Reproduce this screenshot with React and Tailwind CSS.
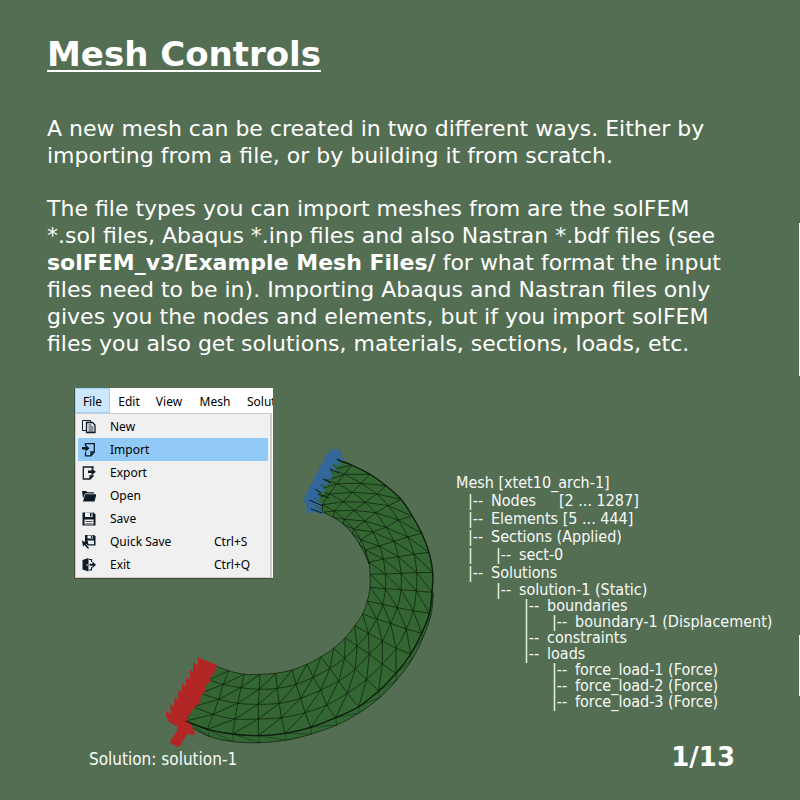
import React from "react";

/* Cross sections of the arch, each listed from the outer to the inner edge. */
const upper = [
  [[140, 58], [125, 90], [108, 122], [82, 150], [60, 180]],
  [[185, 75], [163, 103], [140, 131], [118, 162], [97, 195]],
  [[240, 103], [213, 130], [187, 157], [160, 185], [133, 213]],
  [[288, 137], [260, 162], [225, 187], [192, 211], [163, 238]],
  [[333, 178], [295, 197], [257, 218], [224, 243], [192, 268]],
  [[367, 228], [325, 240], [288, 262], [248, 276], [213, 300]],
  [[395, 280], [353, 291], [312, 304], [268, 318], [226, 330]],
  [[417, 337], [372, 343], [325, 350], [280, 357], [237, 367]],
  [[428, 397], [380, 398], [333, 400], [286, 402], [240, 402]],
  [[426, 457], [379, 453], [333, 449], [286, 446], [240, 442]],
].map((s) => s.map(([x, y]) => [290 + x / 3, 440 + y / 3]));

const lower = [
  [[838, 70], [790, 62], [742, 53], [698, 43], [652, 33]],
  [[815, 130], [769, 117], [722, 100], [680, 87], [638, 72]],
  [[782, 192], [738, 175], [697, 153], [655, 130], [614, 107]],
  [[738, 250], [697, 222], [658, 192], [621, 168], [586, 143]],
  [[686, 303], [650, 268], [616, 237], [584, 205], [551, 175]],
  [[626, 350], [592, 310], [566, 273], [540, 235], [512, 201]],
  [[557, 383], [530, 345], [512, 300], [490, 262], [471, 223]],
  [[482, 412], [465, 368], [452, 325], [438, 283], [426, 240]],
  [[405, 430], [394, 383], [388, 340], [382, 295], [377, 250]],
  [[325, 437], [325, 387], [325, 343], [328, 298], [330, 253]],
  [[248, 432], [255, 387], [263, 340], [273, 293], [283, 253]],
  [[172, 418], [190, 373], [206, 328], [220, 283], [236, 242]],
  [[108, 393], [130, 350], [153, 310], [176, 270], [198, 228]],
].map((s) => s.map(([x, y]) => [150 + x / 3, 590 + y / 3]));

const sections = [...upper, ...lower];

const outerRim = [
  [850, 10], [843, 75], [820, 140], [785, 210], [740, 270], [690, 322], [626, 370],
  [560, 405], [485, 432], [410, 450], [330, 458], [250, 455], [180, 440], [120, 410],
].map(([x, y]) => [150 + x / 3, 590 + y / 3]);

const innerRim = [
  [64, 208], [98, 217], [130, 232], [160, 252], [186, 280], [208, 312], [226, 345], [237, 372],
].map(([x, y]) => [290 + x / 3, 440 + y / 3]);

const at = (x, y) => x.toFixed(1) + " " + y.toFixed(1);
const line = (pts) => "M" + pts.map(([x, y]) => at(x, y)).join("L");

/* The curve segments through the points, without the opening move. */
const bend = (pts) =>
  pts
    .slice(1)
    .map((p, i) => {
      const a = pts[i];
      const before = pts[i - 1] || a;
      const after = pts[i + 2] || p;
      return (
        "C" + at(a[0] + (p[0] - before[0]) / 6, a[1] + (p[1] - before[1]) / 6) +
        " " + at(p[0] - (after[0] - a[0]) / 6, p[1] - (after[1] - a[1]) / 6) +
        " " + at(p[0], p[1])
      );
    })
    .join("");
const curve = (pts) => "M" + at(pts[0][0], pts[0][1]) + bend(pts);
const band = (a, b) => {
  const back = b.slice().reverse();
  return curve(a) + "L" + at(back[0][0], back[0][1]) + bend(back) + "Z";
};

const outer = sections.map((s) => s[0]);
const inner = sections.map((s) => s[4]);
const along = [0, 1, 2, 3, 4].map((k) => curve(sections.map((s) => s[k])));
const across = sections.map((s) => line(s));
const diagonals = sections
  .slice(1)
  .flatMap((next, i) => [0, 1, 2, 3].map((k) => line([sections[i][k + 1], next[k]])));
const rimTies = outerRim.map((p, i) => line([outer[Math.min(9 + i, 22)], p, outer[Math.min(10 + i, 22)]]));
const innerTies = innerRim.map((p, i) => line([inner[i], p, inner[Math.min(i + 1, 7)]]));

function ArchMesh() {
  return (
    <svg
      className="absolute left-[113px] top-[57px] h-[305px] w-[280px]"
      viewBox="160 445 280 305"
      role="img"
      aria-label="Meshed arch with boundary and loads"
    >
      <g fill="#336633">
        <path d={band(outer, inner)} />
        <path d={band(outer.slice(9), outerRim)} />
        <path d={band(inner.slice(0, 8), innerRim)} />
      </g>
      <g fill="none" stroke="#0b1a0b" strokeWidth="0.8" strokeOpacity="0.85">
        {along.map((d, i) => <path key={i} d={d} />)}
        {across.map((d, i) => <path key={i} d={d} />)}
        {diagonals.map((d, i) => <path key={i} d={d} />)}
        {rimTies.map((d, i) => <path key={i} d={d} strokeOpacity="0.5" />)}
        {innerTies.map((d, i) => <path key={i} d={d} />)}
        <path d={curve(outerRim)} />
        <path d={curve(innerRim)} />
        <path d={along[0]} strokeWidth="1.3" />
      </g>
      <path
        fill="#336699"
        d="M329.5 449.5H341L339.5 452L342 454L340 457L345 459L344 461L336.500 459L341 464L339 466L331 463.500L337 470V473L330 469.500L332 476L330.500 480L323 478L329 483L327 486L320 484L326 491L323 493L317 490L321 497L319 500L314 498L322 504L321 508L313 505L323 512L322 515L315 512L306.500 513V503L304 502L305 495L308 491L310 486L313 482L314 477L318 472L320 466L324 461L325 456L329 453Z"
      />
      <path stroke="#0b1a0b" strokeWidth="1" d="M309 500L323 506M311 509L322 513M315 489L321 493M318 494L329 498M323 479L331 483M330 469L339 473M337 459L345 463" />
      <path
        fill="#b22626"
        d="M197.500 657L218 665.500L215 668L216 671L210 678L211 681L205 686L206 690L200 698L201 701L195 707L192 711L187 718L189 723L191 725L193 729L195 733L194 735L187 734L180.500 745.500L177 747L170 743L171 740L177 731L178 727L169 722L166 716V711L170.500 714V704L174 707L174.500 697L178 700L178.500 689L182 693L182 683L186 687L186 677L189.500 680L190 669L193.500 673L193 662L198 666Z"
      />
      <path stroke="#0b1a0b" strokeWidth="1" d="M185 721L208 729" />
    </svg>
  );
}

const icons = {
  New: (
    <g fill="none" stroke="#0d1b26">
      <path d="M4 10.500H0.500V0.500H8.500V2" />
      <path d="M4.500 2.500H10.500L13 5V12.500H4.500Z" strokeWidth="1.300" />
      <path d="M6.500 5H9.500M6.500 7H11.500M6.500 9H11.500M6.500 11H11.500" strokeWidth="1.400" strokeOpacity="0.6" />
    </g>
  ),
  Import: (
    <g fill="none" stroke="#0d1b26" strokeWidth="1.300">
      <path d="M3.500 3V0.700H12.300V9L9 12.800H3.500V9M12.300 9H9V12.800" />
      <path d="M0 4H3.500V1.800L7.500 5.300L3.500 8.800V6.500H0Z" fill="#0d1b26" stroke="none" />
    </g>
  ),
  Export: (
    <g fill="none" stroke="#0d1b26" strokeWidth="1.300">
      <path d="M11 3V1H1.300V13H8L11 10V9M8 13V10H11" />
      <path d="M6 4.500H9.500V2L13.800 5.700L9.500 9.500V7H6Z" fill="#0d1b26" stroke="none" />
    </g>
  ),
  Open: (
    <g fill="#0d1b26">
      <path d="M0 2H4L5.500 3.200H12V4.500H3L1 9.500Z" />
      <path d="M3.200 5.300H14.500L12.500 12.500H1Z" />
    </g>
  ),
  Save: (
    <g>
      <path d="M0.500 0.500H11.500L13.500 2.500V13.500H0.500Z" fill="#0d1b26" />
      <path d="M3 0.500H10.500V5H3ZM2.500 7.500H11.500V12.500H2.500Z" fill="#f0f0f0" />
      <path d="M8 1H9.500V4.200H8ZM3.500 9H10.500V9.700H3.500ZM3.500 10.900H10.500V11.600H3.500Z" fill="#0d1b26" />
    </g>
  ),
  "Quick Save": (
    <g>
      <path d="M3 0H12L13.500 1.500V10.500H6L3 7.500Z" fill="#0d1b26" />
      <path d="M5.500 0.500H11V3.500H5.500ZM5.500 5.500H12V9.300H6.500Z" fill="#f0f0f0" />
      <path d="M9 0.800H10.200V3H9Z" fill="#0d1b26" />
      <path d="M0 5.500L1 11.500L2.500 10L6 14L7 13L4 9L6 8.500Z" fill="#0d1b26" />
    </g>
  ),
  Exit: (
    <g fill="#0d1b26">
      <path d="M0.500 2L6.500 0V13.500L0.500 11.500Z" />
      <path d="M7 1.500H9.500V4M9.500 9V12H7" fill="none" stroke="#0d1b26" strokeWidth="1.200" />
      <path d="M7.500 5.700H10.500V3.500L14 6.700L10.500 10V7.800H7.500Z" />
      <circle cx="5" cy="7" r="0.800" fill="#f0f0f0" />
    </g>
  ),
};

const items = [
  { label: "New" },
  { label: "Import", active: true },
  { label: "Export" },
  { label: "Open" },
  { label: "Save" },
  { label: "Quick Save", keys: "Ctrl+S" },
  { label: "Exit", keys: "Ctrl+Q" },
];

function FileMenu() {
  return (
    <div className="ml-[27px] w-[199px] overflow-hidden border-b border-l border-[#3f5040] bg-white font-['Noto_Sans',sans-serif] text-[12px] text-black">
      <nav className="flex h-[25px] w-[230px] leading-[27px]">
        <button className="w-[35px] border border-[#99d1ff] bg-[#cce8ff] leading-[25px]">File</button>
        <button className="w-[38px]">Edit</button>
        <button className="w-[42px]">View</button>
        <button className="w-[50px]">Mesh</button>
        <button className="pl-[7px]">Solution</button>
      </nav>
      <div className="mr-px border border-r-2 border-[#cccccc] bg-[#f0f0f0] px-[2px] py-px leading-[23px]">
        {items.map((it) => (
          <button
            key={it.label}
            className={"flex h-[23px] w-full items-center pl-1 text-left " + (it.active ? "bg-[#91c9f7]" : "")}
          >
            <svg className="mr-[14px] h-[14px] w-[14px] shrink-0" viewBox="0 0 14 14" aria-hidden="true">
              {icons[it.label]}
            </svg>
            <span className="w-[104px]">{it.label}</span>
            <span>{it.keys}</span>
          </button>
        ))}
      </div>
    </div>
  );
}

/* cols: marks drawn in the ancestor columns before the branch. */
const tree = [
  { cols: [], text: "Nodes     [2 ... 1287]", tall: true },
  { cols: [], text: "Elements [5 ... 444]", tall: true },
  { cols: [], text: "Sections (Applied)", tall: true },
  { cols: ["|"], text: "sect-0", tall: true },
  { cols: [], text: "Solutions", tall: true },
  { cols: [""], text: "solution-1 (Static)" },
  { cols: ["", ""], text: "boundaries" },
  { cols: ["", "", "|"], text: "boundary-1 (Displacement)" },
  { cols: ["", ""], text: "constraints" },
  { cols: ["", ""], text: "loads" },
  { cols: ["", "", ""], text: "force_load-1 (Force)" },
  { cols: ["", "", ""], text: "force_load-2 (Force)" },
  { cols: ["", "", ""], text: "force_load-3 (Force)" },
];

function MeshTree() {
  return (
    <div className="pt-[86px] whitespace-pre">
      <p className="h-[18px] leading-[18px]">Mesh [xtet10_arch-1]</p>
      <ul className="pl-3">
        {tree.map((row) => (
          <li key={row.text} className={"flex " + (row.tall ? "h-[18px] leading-[18px]" : "h-4 leading-4")}>
            {row.cols.map((mark, n) => (
              <span key={n} className="w-7 shrink-0">{mark}</span>
            ))}
            <span className="w-[23px] shrink-0">|--</span>
            <span>{row.text}</span>
          </li>
        ))}
      </ul>
    </div>
  );
}

export default function App() {
  return (
    <main className="relative min-h-screen overflow-hidden bg-[#546e53] pt-[34px] pl-[47px] font-['DejaVu_Sans',sans-serif] text-white">
      <h1 className="mb-[41px] text-[34px] leading-10 font-bold underline decoration-2 underline-offset-4">Mesh Controls</h1>
      <div className="max-w-[690px] space-y-[26px] text-[22px] leading-[27px]">
        <p>
          A new mesh can be created in two different ways. Either by importing from a file, or by building it from scratch.
        </p>
        <p>
          The file types you can import meshes from are the solFEM *.sol files, Abaqus *.inp files and also Nastran *.bdf
          files (see <strong>solFEM_v3/Example Mesh Files/</strong> for what format the input files need to be in).
          Importing Abaqus and Nastran files only gives you the nodes and elements, but if you import solFEM files you also
          get solutions, materials, sections, loads, etc.
        </p>
      </div>
      <section className="relative mt-[31px] flex items-start font-['DejaVu_Sans_Condensed','DejaVu_Sans',sans-serif] text-[16px] text-[#f8faf8]">
        <ArchMesh />
        <div className="relative w-[409px] shrink-0">
          <FileMenu />
          <p className="mt-[171px] pl-[42px] text-[17px] leading-[18px]">Solution: solution-1</p>
        </div>
        <div className="relative flex flex-1 flex-col">
          <MeshTree />
          <p className="mt-[31px] mr-[65px] self-end font-['DejaVu_Sans',sans-serif] text-[26px] leading-8 font-bold text-white">1/13</p>
        </div>
      </section>
      <div className="absolute top-[223px] right-0 h-[153px] w-px bg-white" />
      <div className="absolute top-[635px] right-0 h-[61px] w-px bg-white" />
    </main>
  );
}
